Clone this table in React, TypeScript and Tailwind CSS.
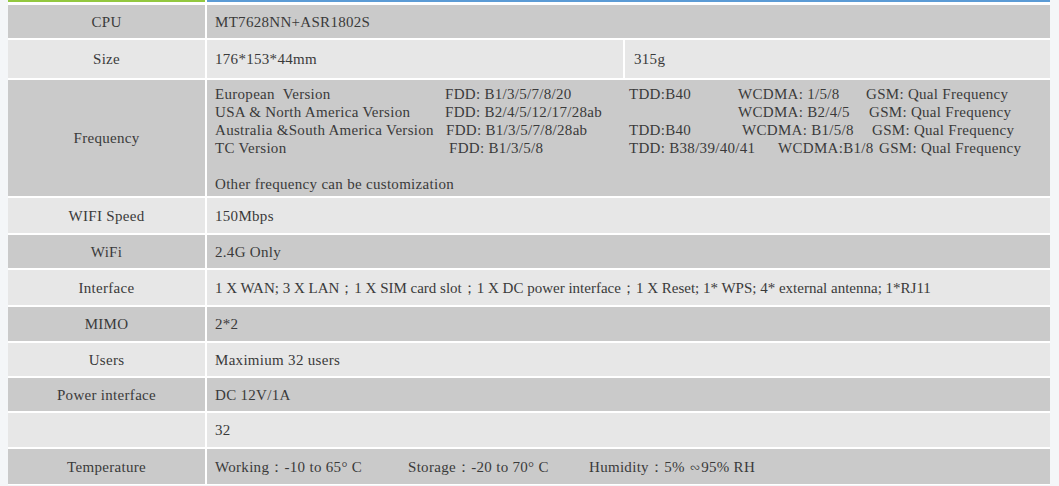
import React from "react";

const DARK = "bg-[#cacaca]";
const LIGHT = "bg-[#e7e7e7]";

function Row({
  label,
  h,
  dark,
  children,
}: {
  label: string;
  h: string;
  dark: boolean;
  children: React.ReactNode;
}) {
  const bg = dark ? DARK : LIGHT;
  return (
    <div className={`flex gap-[2px] ${h}`}>
      <div className={`w-[197px] shrink-0 flex items-center justify-center ${bg}`}>{label}</div>
      <div className={`flex-1 flex items-center pl-2 ${bg}`}>{children}</div>
    </div>
  );
}

export default function App() {
  return (
    <div
      className="min-h-[486px] bg-[#f4f6f8] pl-2 pr-[9px] text-[15px] leading-[18px] text-[#3a3a3a] tracking-[0.3px]"
      style={{ fontFamily: '"Liberation Serif", "Times New Roman", serif' }}
    >
      <div className="w-[1042px] bg-white pb-[1px]">
        <div className="flex gap-[2px] h-[2px]">
          <div className="w-[197px] bg-[#93c83f]" />
          <div className="flex-1 bg-[#5b9bd5]" />
        </div>
        <div className="flex flex-col gap-[2px] pt-[3px]">
          <Row label="CPU" h="h-[33px]" dark>
            MT7628NN+ASR1802S
          </Row>
          <div className="flex gap-[2px] h-[38px]">
            <div className={`w-[197px] shrink-0 flex items-center justify-center ${LIGHT}`}>Size</div>
            <div className={`w-[416px] shrink-0 flex items-center pl-2 ${LIGHT}`}>176*153*44mm</div>
            <div className={`flex-1 flex items-center pl-[9px] ${LIGHT}`}>315g</div>
          </div>
          <div className="flex gap-[2px] h-[116px]">
            <div className={`w-[197px] shrink-0 flex items-center justify-center ${DARK}`}>Frequency</div>
            <div className={`flex-1 pl-2 pt-[5px] ${DARK}`}>
              <div className="flex whitespace-nowrap">
                <span className="w-[230px]">European&nbsp; Version</span>
                <span className="w-[184px]">FDD: B1/3/5/7/8/20</span>
                <span className="w-[109px]">TDD:B40</span>
                <span className="w-[128px]">WCDMA: 1/5/8</span>
                <span>GSM: Qual Frequency</span>
              </div>
              <div className="flex whitespace-nowrap">
                <span className="w-[230px]">USA &amp; North America Version</span>
                <span className="w-[293px]">FDD: B2/4/5/12/17/28ab</span>
                <span className="w-[131px]">WCDMA: B2/4/5</span>
                <span>GSM: Qual Frequency</span>
              </div>
              <div className="flex whitespace-nowrap">
                <span className="w-[231px]">Australia &amp;South America Version</span>
                <span className="w-[183px]">FDD: B1/3/5/7/8/28ab</span>
                <span className="w-[113px]">TDD:B40</span>
                <span className="w-[130px]">WCDMA: B1/5/8</span>
                <span>GSM: Qual Frequency</span>
              </div>
              <div className="flex whitespace-nowrap">
                <span className="w-[234px]">TC Version</span>
                <span className="w-[180px]">FDD: B1/3/5/8</span>
                <span className="w-[149px]">TDD: B38/39/40/41</span>
                <span className="w-[101px]">WCDMA:B1/8</span>
                <span>GSM: Qual Frequency</span>
              </div>
              <div className="h-[18px]" />
              <div>Other frequency can be customization</div>
            </div>
          </div>
          <Row label="WIFI Speed" h="h-[35px]" dark={false}>
            150Mbps
          </Row>
          <Row label="WiFi" h="h-[33px]" dark>
            2.4G Only
          </Row>
          <Row label="Interface" h="h-[35px]" dark={false}>
            <span className="tracking-normal">
              1 X WAN; 3 X LAN；1 X SIM card slot；1 X DC power interface；1 X Reset; 1* WPS; 4* external antenna; 1*RJ11
            </span>
          </Row>
          <Row label="MIMO" h="h-[34px]" dark>
            2*2
          </Row>
          <Row label="Users" h="h-[33px]" dark={false}>
            Maximium 32 users
          </Row>
          <Row label="Power interface" h="h-[33px]" dark>
            DC 12V/1A
          </Row>
          <Row label="" h="h-[34px]" dark={false}>
            32
          </Row>
          <Row label="Temperature" h="h-[35px]" dark>
            <span className="w-[193px]">Working：-10 to 65° C</span>
            <span className="w-[181px]">Storage：-20 to 70° C</span>
            <span>Humidity：5% ∽95% RH</span>
          </Row>
        </div>
      </div>
    </div>
  );
}
